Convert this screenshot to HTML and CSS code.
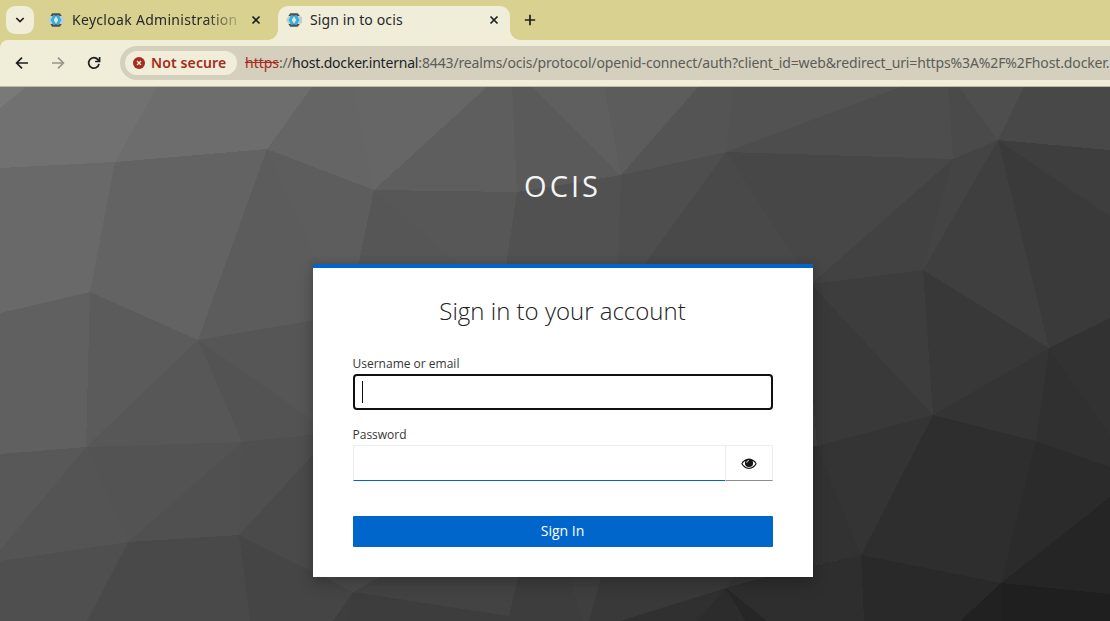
FILE: index.html
```html
<!DOCTYPE html>
<html lang="en">
<head>
<meta charset="utf-8">
<title>Sign in to ocis</title>
<link rel="stylesheet" href="styles.css">
</head>
<body>
<svg class="defs" width="0" height="0" aria-hidden="true">
  <symbol id="keycloak" viewBox="0 0 16 16">
    <path d="M2.400 4.200h11.600l2 .8v6l-2 .8H2.400L0 8z" fill="#c8cacb"/>
    <path d="M4.200 1.200h7.600l2 2.800H2.400z" fill="#4d4d4d"/>
    <path d="M2.400 12h11.400l-2 2.800H4.200z" fill="#4d4d4d"/>
    <path d="M4.500 3.400h7v9.200h-7z" fill="#68767c"/>
    <path d="M6.800 3.400 4 8l2.800 4.600" fill="none" stroke="#22b8ea" stroke-width="2.500"/>
    <path d="M9.200 3.400 12 8l-2.800 4.600" fill="none" stroke="#22b8ea" stroke-width="2.500"/>
    <path d="M8 4 10.300 8 8 12 5.700 8z" fill="#dfe6e8"/>
  </symbol>
</svg>
<div class="window">
  <header class="tabstrip">
    <button class="tab-search" aria-label="Search tabs"><svg width="10" height="8" viewBox="0 0 10 8"><path d="M1.300 2 5 5.600 8.700 2" class="ink"/></svg></button>
    <div class="tab">
      <svg class="favicon" width="16" height="16"><use href="#keycloak"/></svg>
      <span class="tab-title fade">Keycloak Administration</span>
      <svg class="close" width="10" height="10" viewBox="0 0 10 10"><path d="M1.500 1.500l7 7m0-7l-7 7" class="ink"/></svg>
    </div>
    <div class="tab active">
      <svg class="favicon" width="16" height="16"><use href="#keycloak"/></svg>
      <span class="tab-title">Sign in to ocis</span>
      <svg class="close" width="10" height="10" viewBox="0 0 10 10"><path d="M1.500 1.500l7 7m0-7l-7 7" class="ink"/></svg>
    </div>
    <svg class="new-tab" width="12" height="12" viewBox="0 0 12 12"><path d="M6 .8v10.400M.8 6h10.400" class="ink"/></svg>
  </header>
  <nav class="toolbar">
    <svg class="nav-icon" width="14" height="14" viewBox="0 0 14 14"><path d="M13 7H1.800M7 1.600 1.600 7 7 12.400" class="ink"/></svg>
    <svg class="nav-icon dim" width="14" height="14" viewBox="0 0 14 14"><path d="M1 7h11.200M7 1.600 12.400 7 7 12.400" class="ink"/></svg>
    <svg class="nav-icon" width="14" height="14" viewBox="0 0 14 14"><path d="M12 7.800A5.200 5.200 0 1 1 10.900 3.600L12.300 5M12.600 1v4.500H8.100" class="ink"/></svg>
    <div class="omnibox">
      <div class="chip">
        <svg width="12" height="12" viewBox="0 0 12 12"><circle cx="6" cy="6" r="6" fill="#a52a22"/><path d="M4 4l4 4m0-4L4 8" stroke="#f0eed8" stroke-width="1.400"/></svg>
        <span class="chip-label">Not secure</span>
      </div>
      <div class="url"><span class="scheme">https</span><span class="sep">://</span><span class="host">host.docker.internal</span><span class="path">:8443/realms/ocis/protocol/openid-connect/auth?client_id=web&amp;redirect_uri=https%3A%2F%2Fhost.docker.</span></div>
    </div>
  </nav>
  <main class="page">
    <svg class="backdrop" viewBox="0 87 1110 534" aria-hidden="true">
      <path fill="#414141" d="M0 87H1110V621H0z"/>
      <path fill="#5c5c5c" d="M250 140H400V400H250z"/>
      <!-- top row -->
      <path fill="#797979" d="M0 87L26 87L0 108z"/>
      <path fill="#717171" d="M26 87L157 87L115 162L0 168V108z"/>
      <path fill="#6d6d6d" d="M157 87L312 87L267 149L115 162z"/>
      <path fill="#656565" d="M312 87L353 87L374 190L267 149z"/>
      <path fill="#666666" d="M353 87L487 87L374 190z"/>
      <path fill="#5e5e5e" d="M487 87L512 87L517 192L374 190z"/>
      <path fill="#5a5a5a" d="M512 87L532 87L621 175L517 192z"/>
      <path fill="#5f5f5f" d="M532 87L604 87L621 175z"/>
      <path fill="#5c5c5c" d="M604 87L698 87L621 175z"/>
      <path fill="#545454" d="M698 87L733 87L726 152L621 175z"/>
      <path fill="#525252" d="M733 87L900 87L726 152z"/>
      <path fill="#4d4d4d" d="M900 87L948 87L953 159L726 152z"/>
      <path fill="#4a4a4a" d="M948 87L959 87L998 140L953 159z"/>
      <path fill="#4e4e4e" d="M959 87L1024 87L998 140z"/>
      <path fill="#484848" d="M1024 87H1110V150L998 140z"/>
      <!-- upper row -->
      <path fill="#696969" d="M0 168L115 162L90 292L0 313z"/>
      <path fill="#636363" d="M115 162L267 149L198 340L90 292z"/>
      <path fill="#5c5c5c" d="M267 149L320 266V319L198 340z"/>
      <path fill="#5d5d5d" d="M267 149L374 190L358 266H320z"/>
      <path fill="#565656" d="M374 190L462 266H358z"/>
      <path fill="#575757" d="M374 190L517 192L506 266H462z"/>
      <path fill="#515151" d="M517 192L621 175L618 266H506z"/>
      <path fill="#4e4e4e" d="M621 175L726 152L643 266H618z"/>
      <path fill="#494949" d="M726 152L811 284L643 266z"/>
      <path fill="#474747" d="M726 152L953 159L811 284z"/>
      <path fill="#424242" d="M953 159L923 270L811 284z"/>
      <path fill="#444444" d="M953 159L998 140L923 270z"/>
      <path fill="#3f3f3f" d="M998 140L1049 348L923 270z"/>
      <path fill="#3a3a3a" d="M998 140L1110 216V318L1049 348z"/>
      <path fill="#3e3e3e" d="M998 140L1110 150V216z"/>
      <!-- middle row -->
      <path fill="#606060" d="M0 313L90 292L86 447L0 454z"/>
      <path fill="#5b5b5b" d="M90 292L198 340L86 447z"/>
      <path fill="#575757" d="M198 340L242 442L86 447z"/>
      <path fill="#565656" d="M198 340L320 319V425z"/>
      <path fill="#535353" d="M198 340L320 425V434L242 442z"/>
      <path fill="#3d3d3d" d="M811 284L923 270L933 415z"/>
      <path fill="#383838" d="M923 270L1049 348L933 415z"/>
      <path fill="#393939" d="M811 284L933 415L817 446L805 300z"/>
      <path fill="#343434" d="M1049 348L1036 441L933 415z"/>
      <path fill="#323232" d="M1049 348L1110 318V435z"/>
      <path fill="#303030" d="M1049 348L1110 435V467L1036 441z"/>
      <!-- lower row -->
      <path fill="#585858" d="M0 454L86 447L0 550z"/>
      <path fill="#545454" d="M86 447L128 542L0 561V550z"/>
      <path fill="#535353" d="M86 447L242 442L128 542z"/>
      <path fill="#505050" d="M242 442L239 535L128 542z"/>
      <path fill="#4f4f4f" d="M242 442L320 434V447L239 535z"/>
      <path fill="#4a4a4a" d="M239 535L320 447V580L353 592z"/>
      <path fill="#343434" d="M817 446L933 415L861 555z"/>
      <path fill="#323232" d="M817 446L861 555L800 568V446z"/>
      <path fill="#2e2e2e" d="M933 415L1036 441L1001 583L861 555z"/>
      <path fill="#2b2b2b" d="M1036 441L1110 467V497L1001 583z"/>
      <path fill="#252525" d="M1001 583L1110 497V594z"/>
      <!-- bottom row -->
      <path fill="#4f4f4f" d="M0 561L128 542L87 621H0z"/>
      <path fill="#494949" d="M128 542L239 535L250 621H87z"/>
      <path fill="#454545" d="M239 535L353 592L333 621H250z"/>
      <path fill="#3e3e3e" d="M353 592L348 621H333z"/>
      <path fill="#3d3d3d" d="M353 592L509 616L536 621H348z"/>
      <path fill="#4a4a4a" d="M353 592L310 570H352z"/>
      <path fill="#4a4a4a" d="M353 592L352 570H393z"/>
      <path fill="#434343" d="M353 592L393 570H520L509 616z"/>
      <path fill="#3d3d3d" d="M520 570H568L582 621H536L509 616z"/>
      <path fill="#3f3f3f" d="M568 570H603L589 621H582z"/>
      <path fill="#393939" d="M603 570H740L726 588L620 621H589z"/>
      <path fill="#303030" d="M726 588L697 621H620z"/>
      <path fill="#2c2c2c" d="M726 588L745 621H697z"/>
      <path fill="#262626" d="M726 588L767 621H745z"/>
      <path fill="#363636" d="M726 588L740 570H792z"/>
      <path fill="#2e2e2e" d="M726 588L792 570L861 555L864 621H767z"/>
      <path fill="#292929" d="M861 555L1001 583L960 621H864z"/>
      <path fill="#212121" d="M1001 583L1002 621H960z"/>
      <path fill="#1f1f1f" d="M1001 583L1110 594V621H1002z"/>
    </svg>
    <div class="login">
      <div class="realm">OCIS</div>
      <form class="card">
        <h1 class="title">Sign in to your account</h1>
        <label class="label">Username or email</label>
        <div class="input focused"><span class="caret"></span></div>
        <label class="label">Password</label>
        <div class="password">
          <div class="input"></div>
          <button type="button" class="reveal" aria-label="Show password">
            <svg width="16" height="12" viewBox="0 0 16 12"><path d="M8 .5C4.500.5 1.800 2.700.3 5.700c1.500 3 4.200 5.200 7.700 5.200s6.200-2.200 7.700-5.200C14.200 2.700 11.500.5 8 .5z" fill="#151515"/><path d="M4.600 2.700C3.300 3.400 2.300 4.500 1.500 5.700 2.900 8 5.200 9.700 8 9.700s5.100-1.700 6.500-4c-.8-1.200-1.800-2.300-3.100-3 .5.700.7 1.500.7 2.300a4.100 4.100 0 0 1-8.200 0c0-.8.2-1.600.7-2.300z" fill="#fff"/><path d="M5.700 4.800A2.400 2.400 0 0 1 8 2.500" fill="none" stroke="#fff" stroke-width=".8"/></svg>
          </button>
        </div>
        <button type="button" class="submit">Sign In</button>
      </form>
    </div>
  </main>
</div>
</body>
</html>
```

FILE: styles.css
```css
* { box-sizing: border-box; }
body { margin: 0; overflow: hidden; font-family: "Open Sans", "Noto Sans", sans-serif; }
button { border: 0; padding: 0; font: inherit; }
.defs { position: absolute; }
.window { width: 1110px; height: 621px; display: flex; flex-direction: column; overflow: hidden; background: #d9d18f; }
.ink { fill: none; stroke: #1d1f23; stroke-width: 1.7; }

.tabstrip { height: 40px; display: flex; align-items: flex-start; padding: 6px 0 0 6px; font-family: "Noto Sans", sans-serif; font-size: 14px; color: #26282c; }
.tab-search { width: 28px; height: 28px; border-radius: 9px; background: #f0eed8; display: flex; align-items: center; justify-content: center; }
.tab { width: 230px; height: 28px; display: flex; align-items: center; padding: 0 3px 0 14px; margin-right: 14px; }
.tab-title { flex: 1; margin-left: 8px; white-space: nowrap; overflow: hidden; line-height: 20px; letter-spacing: .13px; }
.fade { margin-right: 13px; letter-spacing: .3px; -webkit-mask-image: linear-gradient(90deg, #000 80%, rgba(0, 0, 0, .2)); mask-image: linear-gradient(90deg, #000 80%, rgba(0, 0, 0, .2)); }
.tab.active { position: relative; width: 232px; height: 34px; padding: 0 11px 6px 8px; margin: 0; background: #f0eed8; border-radius: 10px 10px 0 0; }
.tab.active::before, .tab.active::after { content: ""; position: absolute; bottom: 0; width: 10px; height: 10px; }
.tab.active::before { left: -10px; background: radial-gradient(circle at 0 0, transparent 9.5px, #f0eed8 10px); }
.tab.active::after { right: -10px; background: radial-gradient(circle at 100% 0, transparent 9.5px, #f0eed8 10px); }
.new-tab { margin: 8px 0 0 14px; }

.toolbar { height: 47px; flex: none; display: flex; align-items: center; padding-left: 15px; background: #f0eed8; border-bottom: 1px solid #bebba3; border-radius: 8px 0 0 0; }
.nav-icon { flex: none; margin-right: 22px; }
.nav-icon.dim { opacity: .42; }
.omnibox { flex: 1; min-width: 0; height: 34px; margin-left: -3px; padding-left: 5px; display: flex; align-items: center; background: #d4d0bd; border-radius: 17px 0 0 17px; font-family: "Noto Sans", sans-serif; font-size: 14px; }
.chip { flex: none; width: 112px; height: 24px; padding-left: 8px; display: flex; align-items: center; gap: 6px; border-radius: 12px; background: #f0eed8; }
.chip-label { color: #a52a22; font-weight: 600; letter-spacing: .12px; white-space: nowrap; padding-bottom: 2px; }
.url { margin-left: 8px; padding-bottom: 2px; white-space: nowrap; color: #5d5c58; letter-spacing: -.13px; }
.scheme { color: #a52a22; text-decoration: line-through; letter-spacing: 0; }
.sep { letter-spacing: -.4px; }
.host { color: #1d1f23; letter-spacing: -.2px; }

.page { flex: 1; display: grid; }
.backdrop, .login { grid-area: 1 / 1; min-width: 0; }
.backdrop { width: 1110px; height: 534px; shape-rendering: crispEdges; }
.login { position: relative; display: flex; flex-direction: column; align-items: center; width: 500px; margin-left: 313px; }
.realm { height: 177px; padding: 79px 1px 0 0; line-height: 40px; font-size: 29px; letter-spacing: 3px; color: #f4f4f4; white-space: nowrap; }
.card { width: 500px; height: 313px; padding: 25px 40px 0; background: #fff; border-top: 4px solid #06c; box-shadow: 0 8px 16px rgba(3, 3, 3, .16), 0 0 8px 1px rgba(3, 3, 3, .12); }
.title { margin: 0 0 26px; padding-right: 1px; line-height: 36px; font-size: 24px; font-weight: 300; text-align: center; color: #222; }
.label { display: block; height: 19px; line-height: 18px; font-size: 12px; color: #363636; margin-left: -.5px; }
.input { height: 36px; border: 1px solid #ededed; border-bottom-color: #06c; background: #fff; }
.input.focused { border: 2px solid #101010; border-radius: 4px; margin-bottom: 16px; padding: 5px 7px; }
.caret { display: block; width: 1px; height: 22px; background: #101010; }
.password { display: flex; }
.password .input { width: 372px; border-right: 0; }
.reveal { width: 48px; height: 36px; border: 1px solid #ededed; border-bottom-color: #8a8d90; background: #fff; display: flex; align-items: center; justify-content: center; padding: 2px 1px 0 0; }
.submit { display: block; width: 420px; height: 31px; margin-top: 35px; padding: 0 1px 2px 0; background: #06c; color: #fff; border-radius: 1px; font-size: 14px; line-height: 29px; }
```
